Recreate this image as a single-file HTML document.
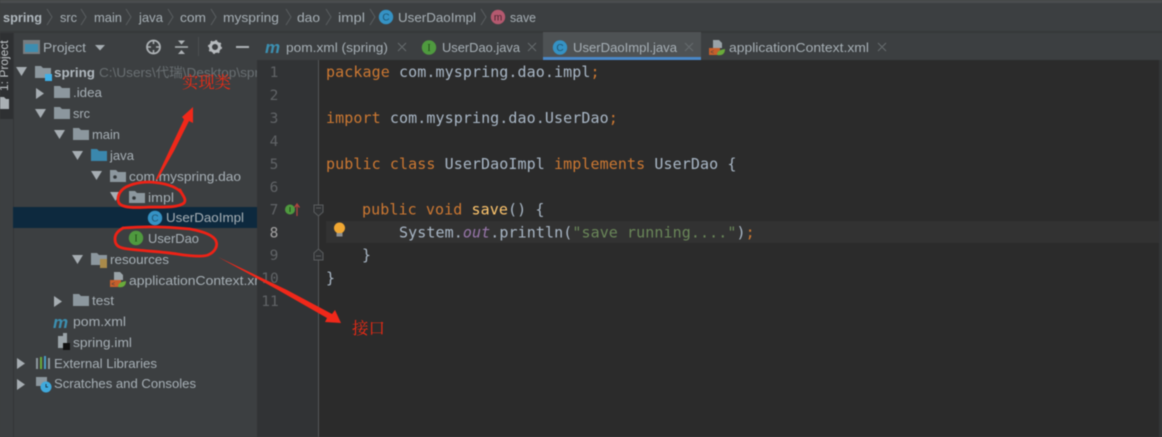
<!DOCTYPE html>
<html><head><meta charset="utf-8"><style>
html,body{margin:0;padding:0;width:1162px;height:437px;overflow:hidden;background:#3c3f41}
svg{display:block;filter:blur(.45px)}
.u{font-family:"Liberation Sans",sans-serif;font-size:13.3px;fill:#a6afb5}
.c{font-family:"DejaVu Sans Mono","Liberation Mono",monospace;font-size:15px;letter-spacing:.09px;fill:#a9b7c6}
.k{fill:#cc7832}.n{font-family:"DejaVu Sans Mono",monospace;font-size:14.5px;fill:#606366}
.r{fill:#f02a14}
.sep{fill:none;stroke:#5a5e60;stroke-width:1}
</style></head><body>
<svg width="1162" height="437" viewBox="0 0 1162 437" xmlns="http://www.w3.org/2000/svg">
<defs>
<g id="f"><path d="M0 1h6l2 2h8v10H0z" fill="#8c979e"/></g>
<g id="tr"><path d="M0 0h11l-5.500 9z" fill="#a6adb2"/></g>
<g id="tc"><path d="M0 0l8 5.500-8 5.500z" fill="#a6adb2"/></g>
<g id="pk"><path d="M0 1h6l2 2h8v10H0z" fill="#8c979e"/><circle cx="5" cy="8" r="1.800" fill="#33383b"/></g>
<g id="ci"><circle r="7.200" fill="#3592c4"/><text y="3.500" text-anchor="middle" font-family="Liberation Sans" font-size="10" fill="#1f5673">C</text></g>
<g id="ii"><circle r="7.200" fill="#4f9a3f"/><text y="3.500" text-anchor="middle" font-family="Liberation Serif" font-size="10" fill="#1f4a18">I</text></g>
<g id="xml"><path d="M4 0h6l3 3v5H4z" fill="#9aa3a8"/><rect x="0" y="8" width="11" height="7" fill="#c65f2c"/><text x="1.500" y="14" font-size="6" font-family="Liberation Sans" fill="#3c3f41">&lt;</text><path d="M8 15c0-4 3-5 8-6 0 4-2 7-8 6z" fill="#6aab3a"/></g>
</defs>

<rect width="1162" height="437" fill="#3c3f41"/>
<rect width="1162" height="3" fill="#4a4c4e"/>
<rect y="31" width="1162" height="2" fill="#363839"/>

<!-- breadcrumb -->
<g class="u">
<text x="3" y="22" font-weight="bold" fill="#b0b8be" textLength="39" lengthAdjust="spacingAndGlyphs">spring</text>
<text x="60" y="22" textLength="17" lengthAdjust="spacingAndGlyphs">src</text>
<text x="94" y="22" textLength="28" lengthAdjust="spacingAndGlyphs">main</text>
<text x="139" y="22" textLength="24" lengthAdjust="spacingAndGlyphs">java</text>
<text x="180" y="22" textLength="26" lengthAdjust="spacingAndGlyphs">com</text>
<text x="223" y="22" textLength="56" lengthAdjust="spacingAndGlyphs">myspring</text>
<text x="297" y="22" textLength="23" lengthAdjust="spacingAndGlyphs">dao</text>
<text x="338" y="22" textLength="27" lengthAdjust="spacingAndGlyphs">impl</text>
<text x="398" y="22" textLength="78" lengthAdjust="spacingAndGlyphs">UserDaoImpl</text>
<text x="510" y="22" textLength="26" lengthAdjust="spacingAndGlyphs">save</text>
</g>
<path class="sep" d="M47 9l5 8-5 8M81 9l5 8-5 8M126 9l5 8-5 8M168 9l5 8-5 8M211 9l5 8-5 8M286 9l5 8-5 8M326 9l5 8-5 8M370 9l5 8-5 8M481 9l5 8-5 8"/>
<use href="#ci" x="386" y="17"/>
<circle cx="498" cy="17" r="7.200" fill="#b4596f"/><text x="498" y="20.500" text-anchor="middle" font-family="Liberation Sans" font-size="10" fill="#4a2530">m</text>

<!-- left strip -->
<rect x="0" y="33" width="13" height="404" fill="#3c3f41"/>
<rect x="0" y="33" width="13" height="86" fill="#2e3032"/>
<rect x="13" y="33" width="1" height="404" fill="#333537"/>
<text transform="translate(8,91) rotate(-90)" font-family="Liberation Sans" font-size="12" fill="#c0c4c7">1: Project</text>
<path d="M0 97h4l2 2h3v10H0z" fill="#aab0b4"/>

<!-- project header -->
<rect x="23" y="40" width="17" height="14" fill="#777c80"/><rect x="25" y="44" width="13" height="8" fill="#3d8db0"/>
<text x="43" y="52" class="u" textLength="43" lengthAdjust="spacingAndGlyphs">Project</text>
<path d="M95 45h10l-5 5.500z" fill="#a6adb2"/>
<circle cx="153.500" cy="47" r="6.500" fill="none" stroke="#aeb3b6" stroke-width="1.800"/><path d="M147 47h4M156 47h4M153.500 40v4M153.500 50v4" stroke="#aeb3b6" stroke-width="1.500"/>
<path d="M175 47h13" stroke="#aeb3b6" stroke-width="1.500"/><path d="M178 40.500l3.500 4 3.500-4zM178 54l3.500-4 3.500 4z" fill="#aeb3b6"/>
<rect x="198" y="37" width="1" height="19" fill="#4c4f51"/>
<circle cx="215" cy="47" r="4.500" fill="none" stroke="#b6babd" stroke-width="3"/><circle cx="215" cy="47" r="6.300" fill="none" stroke="#b6babd" stroke-width="1.500" stroke-dasharray="2 2.950"/>
<rect x="236" y="46" width="13" height="2" fill="#aeb3b6"/>

<!-- tabs -->
<rect x="543" y="32" width="158" height="26" fill="#4e5254"/>
<rect x="543" y="57" width="158" height="3" fill="#4a88c7"/>
<text x="265" y="53" font-family="Liberation Sans" font-weight="bold" font-style="italic" font-size="17" fill="#3c8fb0">m</text>
<g class="u">
<text x="286" y="52" textLength="102" lengthAdjust="spacingAndGlyphs">pom.xml (spring)</text>
<text x="442" y="52" textLength="78" lengthAdjust="spacingAndGlyphs">UserDao.java</text>
<text x="573" y="52" textLength="104" lengthAdjust="spacingAndGlyphs">UserDaoImpl.java</text>
<text x="729" y="52" textLength="140" lengthAdjust="spacingAndGlyphs">applicationContext.xml</text>
</g>
<path d="M398 43l8 8M406 43l-8 8M528 43l8 8M536 43l-8 8M685 43l8 8M693 43l-8 8M878 43l8 8M886 43l-8 8" stroke="#666b6e" stroke-width="1.100"/>
<use href="#ii" x="429" y="47.500"/>
<use href="#ci" x="560" y="47.500"/>
<use href="#xml" x="709" y="40"/>

<!-- project tree -->
<rect x="13" y="207" width="244" height="21" fill="#0d293e"/>
<use href="#tr" x="16" y="67"/>
<use href="#tc" x="36" y="88"/>
<use href="#tr" x="35" y="109"/>
<use href="#tr" x="54" y="130"/>
<use href="#tr" x="72" y="151"/>
<use href="#tr" x="91" y="171"/>
<use href="#tr" x="110" y="192"/>
<use href="#tr" x="72" y="255"/>
<use href="#tc" x="54" y="296"/>
<use href="#tc" x="17" y="358"/>
<use href="#tc" x="17" y="379"/>

<use href="#f" x="35" y="65"/><rect x="45" y="74" width="7" height="7" fill="#3fb0e8"/>
<use href="#f" x="54" y="85"/>
<use href="#f" x="54" y="106"/>
<use href="#f" x="73" y="127"/>
<path d="M91 149h6l2 2h8v10H91z" fill="#3a87ad"/>
<use href="#pk" x="110" y="169"/>
<use href="#pk" x="129" y="190"/>
<use href="#ci" x="155" y="218"/>
<use href="#ii" x="136" y="238"/>
<use href="#f" x="91" y="252"/><rect x="100" y="259" width="7" height="9" fill="#a98a4a"/>
<use href="#xml" x="110" y="272"/>
<use href="#f" x="73" y="293"/>
<text x="53" y="328" font-family="Liberation Sans" font-weight="bold" font-style="italic" font-size="17" fill="#3c8fb0">m</text>
<path d="M58 336h5v-3h4v15H58z" fill="#9aa3a8"/><rect x="63" y="343" width="7" height="7" fill="#111"/>
<g fill="#8c979e"><rect x="36" y="358" width="2" height="11"/><rect x="48" y="358" width="2" height="11"/></g>
<rect x="40" y="357" width="2" height="12" fill="#6aab3a"/><rect x="44" y="356" width="2" height="13" fill="#4a9bc2"/>
<path d="M36 377h11v9H36z" fill="#8c979e"/><circle cx="46" cy="387" r="5.500" fill="#3fa9dc"/><path d="M46 384v3h2" stroke="#1d3c4c" fill="none"/>

<g class="u">
<text x="54" y="77" font-weight="bold" fill="#b0b8be" textLength="41" lengthAdjust="spacingAndGlyphs">spring</text>
<text x="99" y="77" fill="#696f72" style="font-family:'Liberation Sans','Noto Sans CJK SC',sans-serif" textLength="160" lengthAdjust="spacingAndGlyphs">C:\Users\代瑞\Desktop\spr</text>
<text x="73" y="97" textLength="29" lengthAdjust="spacingAndGlyphs">.idea</text>
<text x="73" y="118" textLength="17" lengthAdjust="spacingAndGlyphs">src</text>
<text x="92" y="139" textLength="28" lengthAdjust="spacingAndGlyphs">main</text>
<text x="110" y="160" textLength="24" lengthAdjust="spacingAndGlyphs">java</text>
<text x="129" y="181" textLength="112" lengthAdjust="spacingAndGlyphs">com.myspring.dao</text>
<text x="148" y="202" textLength="26" lengthAdjust="spacingAndGlyphs">impl</text>
<text x="166" y="222" textLength="78" lengthAdjust="spacingAndGlyphs">UserDaoImpl</text>
<text x="148" y="243" textLength="51" lengthAdjust="spacingAndGlyphs">UserDao</text>
<text x="110" y="264" textLength="59" lengthAdjust="spacingAndGlyphs">resources</text>
<text x="129" y="285" textLength="140" lengthAdjust="spacingAndGlyphs">applicationContext.xml</text>
<text x="92" y="305" textLength="22" lengthAdjust="spacingAndGlyphs">test</text>
<text x="73" y="326" textLength="53" lengthAdjust="spacingAndGlyphs">pom.xml</text>
<text x="73" y="347" textLength="59" lengthAdjust="spacingAndGlyphs">spring.iml</text>
<text x="54" y="368" textLength="103" lengthAdjust="spacingAndGlyphs">External Libraries</text>
<text x="54" y="388" textLength="142" lengthAdjust="spacingAndGlyphs">Scratches and Consoles</text>
</g>

<!-- editor -->
<rect x="257" y="60" width="905" height="377" fill="#2b2b2b"/>
<rect x="257" y="60" width="61" height="377" fill="#313335"/>
<rect x="318" y="60" width="1" height="377" fill="#555759"/>
<rect x="326" y="221" width="836" height="22" fill="#323232"/>
<rect x="1159" y="60" width="3" height="377" fill="#333537"/>

<g class="n" text-anchor="middle">
<text x="274" y="77">1</text><text x="274" y="100">2</text><text x="274" y="123">3</text><text x="274" y="146">4</text><text x="274" y="169">5</text><text x="274" y="192">6</text><text x="274" y="214.500">7</text><text x="274" y="237.500" style="fill:#a4a3a3">8</text><text x="274" y="260">9</text><text x="270" y="283">10</text><text x="270" y="306">11</text>
</g>

<g class="c">
<text x="326" y="77"><tspan class="k">package</tspan> com.myspring.dao.impl<tspan class="k">;</tspan></text>
<text x="326" y="123"><tspan class="k">import</tspan> com.myspring.dao.UserDao<tspan class="k">;</tspan></text>
<text x="326" y="169"><tspan class="k">public class</tspan> UserDaoImpl <tspan class="k">implements</tspan> UserDao {</text>
<text x="362" y="214.500"><tspan class="k">public void</tspan> <tspan fill="#ffc66d">save</tspan>() {</text>
<text x="399" y="237.500">System.<tspan fill="#9876aa" font-style="italic">out</tspan>.println(<tspan fill="#6a8759">"save running...."</tspan>)<tspan class="k">;</tspan></text>
<text x="362" y="260">}</text>
<text x="326" y="283">}</text>
</g>

<!-- gutter icons -->
<circle cx="290" cy="209.500" r="5" fill="#4f9a3f"/><path d="M290 207v5" stroke="#1f4a18" stroke-width="1"/>
<path d="M297 216v-11M294.500 207.500l2.500-3.500 2.500 3.500" stroke="#b0453f" stroke-width="1.300" fill="none"/>
<path d="M314 205h9v7l-4.500 4-4.500-4zM316 208h5" fill="#313335" stroke="#5a5d5f"/>
<path d="M314 260h9v-7l-4.500-4-4.500 4zM316 256h5" fill="#313335" stroke="#5a5d5f"/>
<circle cx="339.500" cy="228" r="5.500" fill="#f0a732"/><rect x="336.500" y="233" width="6" height="3.500" fill="#8d8f90"/>

<!-- annotations -->
<path fill="#f0281a" d="M155.500 180L170 149 184 119.500 182 117 193 107 193 123 189 121 174 151 158 179z"/>
<path fill="#f0281a" d="M218 257L287 290 332 314 335 310 341 323 325 322 327 318 278 290z"/>
<g fill="none" stroke="#ee2216" stroke-width="2.800" stroke-linejoin="round" stroke-linecap="round">
<path d="M181 192C175 186 165 183 150 182 138 182 127 185 122 190 118 194 117 200 119 203 122 208 135 208 150 207 162 207 178 208 184 203 187 199 182 195 180 190"/>
<path d="M123 228C118 231 115 234 115 239 115 245 118 248 128 249 145 251 165 252 177 254 190 256 203 257 208 255 215 252 218 246 216 241 214 236 206 232 190 229 170 227 145 226 123 228"/>
</g>
<text class="r" x="182" y="88" font-size="16.500" textLength="49" lengthAdjust="spacingAndGlyphs" font-family="'Noto Serif CJK SC',serif">实现类</text>
<text class="r" x="352" y="334" font-size="16.500" font-family="'Noto Serif CJK SC',serif">接口</text>
</svg>
</body></html>
